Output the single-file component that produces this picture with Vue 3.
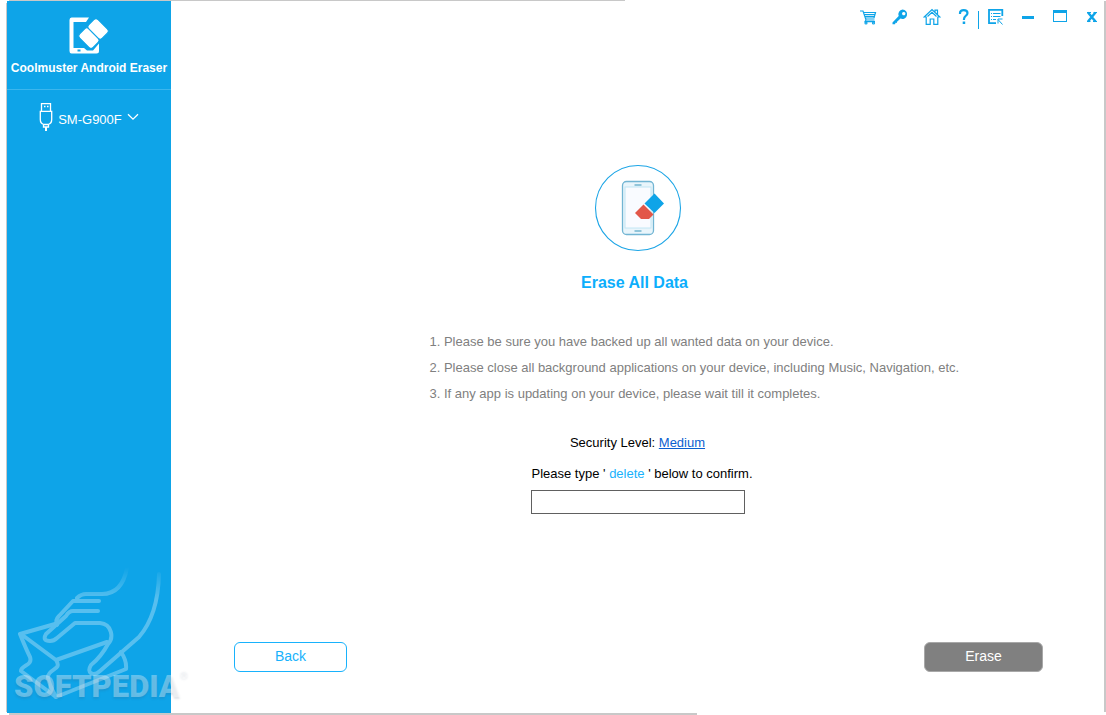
<script setup>
import { ref } from 'vue'

const confirmText = ref('')
const steps = [
  'Please be sure you have backed up all wanted data on your device.',
  'Please close all background applications on your device, including Music, Navigation, etc.',
  'If any app is updating on your device, please wait till it completes.',
]
</script>

<template>
  <div class="window">
    <span class="edge edge-top"></span>
    <span class="edge edge-left"></span>
    <span class="edge edge-right"></span>
    <span class="edge edge-bottom"></span>

    <aside class="sidebar">
      <header class="brand">
        <svg class="logo" width="40" height="38" viewBox="0 0 40 38" aria-hidden="true">
          <path fill="#fff" fill-rule="evenodd" d="M2.500 .5H20L17 5H4.500v26H15l3 2.500h6l6-7V34q0 2.500-2.500 2.500h-25Q.5 36.500.5 34V3Q.5.500 2.500.500ZM8.500 32.500v2h3v-2Z" />
          <g transform="rotate(-45 24.500 16.500)" fill="#fff" stroke="#0ea4e8" stroke-width="1">
            <rect x="11.500" y="7" width="13" height="19" rx="3" />
            <rect x="24.500" y="7" width="13" height="19" rx="3" />
          </g>
        </svg>
        <h1 class="brand-name">Coolmuster Android Eraser</h1>
      </header>
      <button class="device" type="button">
        <svg width="14" height="30" viewBox="0 0 14 30" fill="none" stroke="#fff" aria-hidden="true">
          <path stroke-width="1.300" d="M2.500 9V1.600h9V9M5 4.500h1.500M8 4.500h1.500M1.300 9.300h11.400v8.200q0 4-3.500 5H4.800q-3.500-1-3.500-5Z" />
          <path stroke-width="1.300" d="M4.500 22.500v2.500h5v-2.500" />
          <path stroke-width="2" d="M7 25v4" />
        </svg>
        <span class="device-name">SM-G900F</span>
        <svg class="chevron" width="12" height="8" viewBox="0 0 12 8" fill="none" stroke="#fff" stroke-width="1.300" aria-hidden="true">
          <path d="m1 1.200 5 5 5-5" />
        </svg>
      </button>
      <svg class="hand" width="164" height="140" viewBox="0 0 164 140" fill="none" aria-hidden="true">
        <defs>
          <linearGradient id="fade" gradientUnits="userSpaceOnUse" x1="0" y1="0" x2="0" y2="32">
            <stop offset="0" stop-color="#fff" stop-opacity="0" />
            <stop offset="1" stop-color="#fff" />
          </linearGradient>
        </defs>
        <g stroke="url(#fade)" stroke-width="4" stroke-linecap="round" stroke-linejoin="round" opacity=".3">
          <path d="M120 1Q115 27 95 27H79Q74 27 70 31" />
          <path d="M92 34H66L52 49Q48 53 50 58" />
          <path d="M91 44H66Q62 44 59 49L39 67Q35 74 43 74Q47 74 50 71L68 56H93C105 57 107 71 101 77Q94 90 84 98C79 106 86 110 93 104L132 70Q151 48 152 7" />
          <path d="M48 57 13 67Q19 82 23 90C26 99 14 98 14 104L49 130 119 102Q120 94 114 85" />
          <path d="M14 67 49 93 100 75M49 93C56 104 40 101 41 111Q42 117 49 130" />
        </g>
      </svg>
      <div class="watermark">SOFTPEDIA<span class="reg">®</span></div>
    </aside>

    <main class="main">
      <nav class="toolbar" aria-label="Window tools">
        <button class="tool" type="button" aria-label="Cart">
          <svg width="18" height="18" viewBox="0 0 18 18" fill="none" stroke="#0ea4e8" stroke-width="1.200">
            <path d="M1 3h3l3 9h8.500M4.600 4.500H16.500L15 10H6.500M5.300 6.500h10.700M6 8.300h9.500M7 12l-1 1.700h10" />
            <circle cx="7" cy="15" r="1" /><circle cx="14.500" cy="15" r="1" />
          </svg>
        </button>
        <button class="tool" type="button" aria-label="Register">
          <svg width="18" height="18" viewBox="0 0 18 18">
            <path fill="#0ea4e8" fill-rule="evenodd" d="M11.500 1.500a4.700 4.700 0 1 1-2 9L5.800 14l.2 1-1.500-.2-.4 1.400H1.500v-1.700L7.700 8a4.800 4.800 0 0 1 3.800-6.500Zm1.200 2.400a1.700 1.700 0 1 0 .1 0Z" />
          </svg>
        </button>
        <button class="tool" type="button" aria-label="Home">
          <svg width="18" height="18" viewBox="0 0 18 18" fill="none" stroke="#0ea4e8" stroke-width="1.200">
            <path d="m1.200 9 7.800-7.500L16.800 9h-2v7.300h-4V11H7.200v5.300h-4V9ZM12 4V2.200h2.500v4.300M4.500 8.500 9 4.300l4.500 4.200" />
          </svg>
        </button>
        <button class="tool" type="button" aria-label="Help">
          <svg width="18" height="18" viewBox="0 0 18 18">
            <path fill="none" stroke="#0ea4e8" stroke-width="2.200" d="M5 6V5q0-2.800 3.700-2.800T12.500 5q0 1.700-1.800 2.900T8.900 12" />
            <path fill="#0ea4e8" d="M7.700 13.500h2.500V16H7.700z" />
          </svg>
        </button>
        <span class="divider"></span>
        <button class="tool" type="button" aria-label="Menu">
          <svg width="18" height="18" viewBox="0 0 18 18" fill="none" stroke="#0ea4e8">
            <path stroke-width="1.800" d="M9 15.200H2V1.900h13.300V8" />
            <path d="M4 5.500h1M6 5.500h7.500M4 8.500h1M6 8.500h7.500M4 11.500h1M6 11.500h3M15.500 16.500l-4.500-5M11 15.500v-4.500h4.500" />
          </svg>
        </button>
        <button class="tool" type="button" aria-label="Minimize">
          <svg width="18" height="18" viewBox="0 0 18 18"><path fill="#0ea4e8" d="M3 8h12v3H3z" /></svg>
        </button>
        <button class="tool" type="button" aria-label="Maximize">
          <svg width="18" height="18" viewBox="0 0 18 18"><path fill="#0ea4e8" fill-rule="evenodd" d="M2 2h14v12H2zM3 5v8h12V5z" /></svg>
        </button>
        <button class="tool" type="button" aria-label="Close">
          <svg width="18" height="18" viewBox="0 0 18 18"><path stroke="#0ea4e8" stroke-width="2.400" d="m5 4.500 7.500 9M12.500 4.500l-7.500 9" /><path stroke="#0ea4e8" d="M4 4.500h4M10.500 4.500H14M4 13.500h3.500M10 13.500h4" /></svg>
        </button>
      </nav>

      <section class="content">
        <svg width="88" height="88" viewBox="0 0 88 88" aria-hidden="true">
          <circle cx="44" cy="44" r="42.500" fill="#fff" stroke="#1ca5e6" stroke-width="1.100" />
          <rect x="28.500" y="17.500" width="31" height="53" rx="4" fill="#e9f5fb" stroke="#72b5d3" stroke-width="1.300" />
          <rect x="31" y="23" width="26" height="41" fill="#f9fbff" stroke="#c2e6f4" />
          <path stroke="#91c5da" stroke-width="2" d="M40.500 21h7M40.500 67h7" />
          <path fill="#0ea4e8" d="m60.500 29.500 9.500 10-9.500 9.500-10-9.500Z" />
          <path fill="#e25749" d="m49.500 40.500 10 10-4.500 4.500h-8L41 49Z" />
        </svg>
        <h2 class="title">Erase All Data</h2>
        <ol class="steps">
          <li v-for="(step, i) in steps" :key="i">{{ i + 1 }}. {{ step }}</li>
        </ol>
        <p class="security">Security Level: <a href="#">Medium</a></p>
        <div class="confirm">
          <label for="confirm">Please type ' <span class="word">delete</span> ' below to confirm.</label>
          <input id="confirm" v-model="confirmText" type="text" autocomplete="off" />
        </div>
      </section>

      <footer class="actions">
        <button class="btn back" type="button">Back</button>
        <button class="btn erase" type="button">Erase</button>
      </footer>
    </main>
  </div>
</template>

<style>
body {
  background: #fff;
}
</style>

<style scoped>
.window {
  box-sizing: border-box;
  position: relative;
  display: flex;
  min-height: 100vh;
  padding: 1px 2px 2px 7px;
  font-family: "Liberation Sans", Arial, sans-serif;
  font-size: 13px;
  color: #000;
}
.window button {
  font-family: inherit;
  cursor: pointer;
}
.edge {
  position: absolute;
  background: #c8c8c8;
}
.edge-top {
  top: 0;
  left: 9px;
  width: calc(56% - 3px);
  height: 1px;
}
.edge-left {
  top: 3px;
  bottom: 3px;
  left: 6px;
  width: 1px;
}
.edge-right {
  top: 1px;
  right: 0;
  bottom: 3px;
  width: 2px;
}
.edge-bottom {
  bottom: 0;
  left: 9px;
  width: calc(63% - 9px);
  height: 2px;
}
.sidebar {
  position: relative;
  display: flex;
  flex: none;
  flex-direction: column;
  width: 164px;
  background: #0ea4e8;
  color: #fff;
}
.brand {
  display: flex;
  flex-direction: column;
  align-items: center;
  box-sizing: border-box;
  height: 89px;
  padding-top: 16px;
  border-bottom: 1px solid #3cb6ed;
}
.logo {
  flex: none;
}
.brand-name {
  margin: 5px 0 0;
  font-size: 12px;
  line-height: 16px;
  white-space: nowrap;
}
.device {
  display: flex;
  align-items: center;
  justify-content: center;
  gap: 5px;
  margin-top: 12px;
  padding: 0;
  border: 0;
  background: none;
  color: #fff;
  font-size: 13px;
}
.device-name {
  padding-top: 4px;
}
.hand {
  margin-top: auto;
  margin-bottom: 6px;
}
.watermark {
  position: absolute;
  bottom: 8px;
  left: 7px;
  display: flex;
  align-items: flex-start;
  font-family: Roboto, sans-serif;
  font-size: 31px;
  font-weight: 900;
  line-height: 36px;
  color: rgba(255, 255, 255, 0.35);
  text-shadow: 0 2px 2px rgba(60, 90, 120, 0.16);
}
.reg {
  font-size: 10px;
  line-height: 12px;
}
.main {
  display: flex;
  flex: 1;
  flex-direction: column;
  min-width: 0;
}
.toolbar {
  display: flex;
  align-items: center;
  justify-content: flex-end;
  gap: 14px;
  height: 31px;
  padding-right: 3px;
}
.tool {
  display: flex;
  padding: 0;
  border: 0;
  background: none;
}
.divider {
  width: 1px;
  height: 18px;
  margin: 6px -6px 0 -9px;
  background: #0ea4e8;
}
.content {
  display: flex;
  flex: 1;
  flex-direction: column;
  align-items: center;
  padding-top: 132px;
}
.title {
  margin: 21px 6px 0 0;
  font-size: 16px;
  line-height: 20px;
  color: #0caefc;
}
.steps {
  display: flex;
  flex-direction: column;
  width: 416px;
  margin: 36px 0 0;
  padding: 0;
  list-style: none;
  line-height: 26px;
  color: #808080;
  white-space: nowrap;
}
.security {
  margin: 22px 0 0;
  line-height: 28px;
}
.security a {
  color: #0a5fd0;
}
.confirm {
  display: flex;
  flex-direction: column;
  width: 214px;
  margin-top: 4px;
}
.confirm label {
  padding-left: 1px;
  line-height: 26px;
  white-space: nowrap;
}
.word {
  color: #18b2fc;
}
.confirm input {
  box-sizing: border-box;
  width: 100%;
  height: 24px;
  margin-top: 3px;
  padding: 0 4px;
  border: 1px solid #606060;
  border-radius: 0;
  background: #fff;
  font: inherit;
}
.actions {
  display: flex;
  justify-content: space-between;
  padding: 0 61px 41px 63px;
}
.btn {
  box-sizing: border-box;
  height: 30px;
  padding: 0 0 2px;
  border-radius: 6px;
  font-size: 14px;
}
.back {
  width: 113px;
  border: 1px solid #18b2fc;
  background: #fff;
  color: #18b2fc;
}
.erase {
  width: 119px;
  border: 1px solid #a8a8a8;
  background: #808080;
  color: #fff;
}
</style>
